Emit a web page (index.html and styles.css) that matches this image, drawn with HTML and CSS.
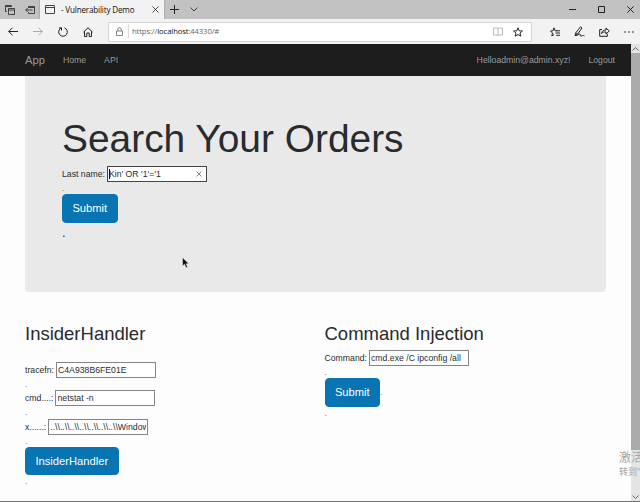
FILE: index.html
```html
<!DOCTYPE html>
<html lang="en">
<head>
<meta charset="utf-8">
<title>- Vulnerability Demo</title>
<link rel="stylesheet" href="styles.css">
</head>
<body>
<div class="window">
  <header class="titlebar">
    <div class="tab-tools">
      <svg width="10" height="10" viewBox="0 0 10 10"><path d="M2 6.500H.5v-6h6v1M.5 1.500h6M3.500 3.500h6v6h-6zM3.500 5h6"/></svg>
      <svg width="10" height="10" viewBox="0 0 10 10"><path d="M3.500 3V1.500h6v7h-6V7M3.500 2.500h6M7.500 5H.7M2.700 3L.7 5l2 2"/></svg>
    </div>
    <div class="tab">
      <svg width="10" height="9" viewBox="0 0 10 9"><path d="M.5.5h9v8h-9zM.5 2.500h9"/></svg>
      <span class="tab-title">- Vulnerability Demo</span>
      <svg width="7" height="7" viewBox="0 0 7 7"><path d="M.5.5l6 6M6.500.5l-6 6"/></svg>
    </div>
    <svg class="new-tab" width="9" height="9" viewBox="0 0 9 9"><path d="M4.500 0v9M0 4.500h9"/></svg>
    <svg class="tab-menu" width="8" height="5" viewBox="0 0 8 5"><path d="M.5.5L4 4 7.500.5"/></svg>
    <div class="window-buttons">
      <svg width="7" height="7" viewBox="0 0 7 7"><path d="M0 3.500h7"/></svg>
      <svg width="7" height="7" viewBox="0 0 7 7"><path d="M.5.5h6v6h-6z"/></svg>
      <svg width="7" height="7" viewBox="0 0 7 7"><path d="M.3.3l6.400 6.400M6.700.3L.3 6.700"/></svg>
    </div>
  </header>
  <div class="toolbar">
    <div class="history">
      <svg width="10" height="9" viewBox="0 0 10 9"><path d="M10 4.500H.7M4.500.7L.7 4.500l3.800 3.800"/></svg>
      <svg class="faded" width="10" height="9" viewBox="0 0 10 9"><path d="M0 4.500h9.300M5.500.7l3.800 3.800-3.800 3.800"/></svg>
      <svg width="10" height="10" viewBox="0 0 10 10"><path d="M3.300 1A4.300 4.300 0 1 0 6.500.9M.9.9h2.600v2.600"/></svg>
      <svg width="10" height="10" viewBox="0 0 10 10"><path d="M.5 5L5 .8 9.500 5M1.500 4.200v5.300h2.300V6h2.400v3.500h2.300V4.200"/></svg>
    </div>
    <div class="address">
      <svg class="lock" width="7" height="9" viewBox="0 0 7 9"><path d="M.5 4h6v4.500h-6zM1.800 4V2.300a1.700 1.700 0 0 1 3.400 0V4"/></svg>
      <span class="url">https://<b>localhost</b>:44330/#</span>
      <svg class="reading" width="10" height="9" viewBox="0 0 10 9"><path d="M.5 1h3.500q1 0 1 .6Q5 1 6 1h3.500v7H6q-1 0-1 .6Q5 8 4 8H.5zM5 1.500v7"/></svg>
      <svg width="10" height="10" viewBox="0 0 10 10"><path d="M5 .8l1.200 3 3.200.2L7 6.100l.8 3.100L5 7.500 2.200 9.200 3 6.100.6 4l3.200-.2z"/></svg>
    </div>
    <div class="actions">
      <svg width="10" height="10" viewBox="0 0 10 10"><path d="M7 3.800H5.200L4 .8l-1 3-2.500.2 2 2-.7 3L4 7.500M6 3.800h4M5.500 6H10M6.200 8.300H10"/></svg>
      <svg width="11" height="11" viewBox="0 0 11 11"><path d="M1 9.500l1-3L6.500.8 8 2 3.500 8.300zM2 6.500l1.500 1.800M1 9.500c3 .8 4-2.500 5-1.500s-.5 2 1 2 1.500-1 3.500-.2"/></svg>
      <svg width="11" height="10" viewBox="0 0 11 10"><path d="M3 2.500H.7v6.800h7.600V7M2.500 6.500C3 4 4.500 3 7 3V1l3.300 3L7 7V5C5 4.900 3.500 5.300 2.500 6.500z"/></svg>
      <svg class="more" width="10" height="2" viewBox="0 0 10 2"><path d="M.5 1h1.200M4.400 1h1.200M8.300 1h1.200"/></svg>
    </div>
  </div>
  <div class="viewport">
    <div class="page">
      <nav class="navbar">
        <a class="brand">App</a>
        <a class="home">Home</a>
        <a>API</a>
        <a class="user">Helloadmin@admin.xyz!</a>
        <a>Logout</a>
      </nav>
      <section class="jumbotron">
        <h1>Search Your Orders</h1>
        <div class="field"><label for="last">Last name:</label><span class="clearable"><input id="last" class="focused" value="Kin' OR '1'='1"><i class="caret"></i><svg width="6" height="6" viewBox="0 0 6 6"><path d="M.5.5l5 5M5.500.5l-5 5"/></svg></span></div>
        <div class="dot">.</div>
        <button>Submit</button>
        <div class="dot large">.</div>
      </section>
      <div class="columns">
        <section class="handler">
          <h2>InsiderHandler</h2>
          <div class="field"><label for="trace">tracefn:</label><input id="trace" value="C4A938B6FE01E"></div>
          <div class="dot">.</div>
          <div class="field"><label for="cmd">cmd....:</label><input id="cmd" value="netstat -n"></div>
          <div class="dot">.</div>
          <div class="field"><label for="path">x......:</label><input id="path" value="..\\..\\..\\..\\..\\..\\..\\Windows"></div>
          <div class="dot">.</div>
          <button>InsiderHandler</button>
          <div class="dot">.</div>
        </section>
        <section class="injection">
          <h2>Command Injection</h2>
          <div class="field"><label for="command">Command:</label><input id="command" value="cmd.exe /C ipconfig /all"></div>
          <div class="dot">.</div>
          <div class="submit-row"><button>Submit</button><span>.</span></div>
          <div class="dot">.</div>
        </section>
      </div>
    </div>
    <div class="scrollbar">
      <svg width="7" height="4" viewBox="0 0 7 4"><path d="M.5 3.500l3-3 3 3"/></svg>
      <div class="thumb"></div>
      <svg width="7" height="4" viewBox="0 0 7 4"><path d="M.5.5l3 3 3-3"/></svg>
    </div>
  </div>
  <div class="watermark"><div>激活</div><div class="hint">转到"</div></div>
  <svg class="pointer" width="8" height="12" viewBox="0 0 8 12"><path d="M.5.5v8.500l2-1.700 1.600 3.500 1.500-.7L4 6.800h2.800z"/></svg>
</div>
</body>
</html>
```

FILE: styles.css
```css
* { box-sizing: border-box; }
body {
  margin: 0;
  font-family: "Liberation Sans", Arial, sans-serif;
  font-size: 8.7px;
  color: #292b2c;
}
svg { display: block; flex: none; fill: none; stroke: #222; stroke-width: 1; }
.window {
  position: relative;
  display: flex;
  flex-direction: column;
  width: 640px;
  height: 502px;
  overflow: hidden;
  background: #fdfdfd;
  border-bottom: 1px solid #707070;
}

/* Browser chrome */
.titlebar { display: flex; align-items: center; height: 19px; background: #c2c2c2; }
.tab-tools { display: flex; gap: 10px; width: 40px; padding-left: 5px; }
.tab-tools svg { stroke: #333; stroke-width: .9; }
.tab {
  display: flex;
  align-items: center;
  width: 124px;
  height: 19px;
  padding-left: 5px;
  background: #f2f2f2;
  box-shadow: 0 0 2px #888;
  clip-path: inset(0 -2px);
}
.tab-title {
  width: 89px;
  margin-left: 6px;
  margin-right: 2px;
  font-family: "Open Sans", "Noto Sans", sans-serif;
  font-size: 8.1px;
  letter-spacing: -.17px;
  line-height: 18px;
  white-space: pre;
  color: #111;
}
.tab > svg:last-child { stroke-width: .8; }
.tab > svg:first-child { stroke: #444; }
.new-tab { margin-left: 6px; }
.tab-menu { margin-left: 11px; stroke-width: .8; }
.window-buttons { display: flex; gap: 22px; margin-left: auto; padding-right: 6px; }
.toolbar { display: flex; align-items: center; height: 25px; background: #f2f2f2; }
.history { display: flex; align-items: center; gap: 15px; width: 108px; padding-left: 8px; }
.faded { stroke: #aaa; }
.address {
  display: flex;
  align-items: center;
  width: 424px;
  height: 20px;
  padding-left: 7px;
  padding-right: 8px;
  background: #fff;
  border: 1px solid #d5d5d5;
}
.lock { stroke: #777; margin-right: 5px; stroke-width: .9; }
.url {
  flex: 1;
  border-left: 1px solid #ddd;
  padding-left: 3px;
  font-family: "Open Sans", "Noto Sans", sans-serif;
  font-size: 7.7px;
  line-height: 14px;
  letter-spacing: -.12px;
  position: relative;
  top: -1px;
  color: #666;
}
.url b { font-weight: 400; color: #111; }
.reading { stroke: #bbb; margin-right: 10px; }
.actions { display: flex; align-items: center; gap: 14px; margin-left: 18px; }
.more { stroke-width: 1.4; }

/* Page */
.viewport { display: flex; flex: 1; min-height: 0; }
.page { width: 631px; overflow: hidden; }
.navbar {
  display: flex;
  align-items: center;
  height: 32px;
  padding: 0 16px 0 25px;
  background: #1d1d1d;
  color: #9b9b9b;
}
.navbar a { margin-right: 18px; }
.navbar .user { margin-left: auto; }
.navbar a:last-child { margin-right: 0; }
.navbar .brand { font-size: 11.2px; }
h1, h2 { margin: 0; font-weight: 400; }
.jumbotron {
  width: 581px;
  height: 216px;
  margin-left: 25px;
  padding: 39px 37px 0;
  background: #e9e9ea;
  border-radius: 0 0 4px 4px;
}
h1 { font-size: 38.9px; line-height: 48px; margin-bottom: 3px; }
.field { display: flex; align-items: center; height: 16px; }
.field label { margin-right: 2px; white-space: pre; }
input {
  display: block;
  width: 100px;
  height: 16px;
  padding: 0 1px;
  border: 1px solid #858585;
  border-radius: 0;
  background: #fff;
  outline: none;
  font: 8.7px "Liberation Sans", Arial, sans-serif;
  color: #292b2c;
}
input.focused { border-color: #444; }
.clearable { position: relative; }
.clearable svg { position: absolute; right: 5px; top: 5px; stroke: #666; stroke-width: .8; }
.caret { position: absolute; left: 2px; top: 3px; width: 1px; height: 10px; background: #111; }
.dot { height: 12px; line-height: 12px; color: #777; }
.dot.large { font-size: 13px; line-height: 20px; color: #292b2c; }
button {
  display: block;
  height: 28.500px;
  padding: 0 9.400px;
  border: 1px solid #0874b1;
  border-radius: 4px;
  background: #0874b1;
  color: #fff;
  font: 11.2px "Liberation Sans", Arial, sans-serif;
}
.columns { display: flex; padding: 29px 25px 0; }
.handler { width: 299.500px; }
h2 { font-size: 18.500px; line-height: 26px; }
.handler h2 { margin-bottom: 15px; }
.handler .field + .dot { height: 12.300px; }
.injection h2 { margin-bottom: 3px; }
.submit-row { display: flex; align-items: center; color: #777; }

.scrollbar {
  display: flex;
  flex-direction: column;
  align-items: center;
  justify-content: space-between;
  width: 9px;
  padding: 3px 0 2px;
  background: #e4e4e4;
}
.scrollbar svg { stroke: #666; }
.thumb { width: 9px; height: 397px; margin-bottom: 43px; background: #ababab; }
.watermark {
  position: absolute;
  left: 619px;
  top: 449px;
  width: 40px;
  font-family: "Noto Sans CJK SC", sans-serif;
  font-size: 12px;
  line-height: 16px;
  color: #a5a5a5;
}
.hint { font-size: 9px; line-height: 13px; }
.pointer { position: absolute; left: 182px; top: 257px; fill: #111; stroke: #eee; stroke-width: .5; }
```
